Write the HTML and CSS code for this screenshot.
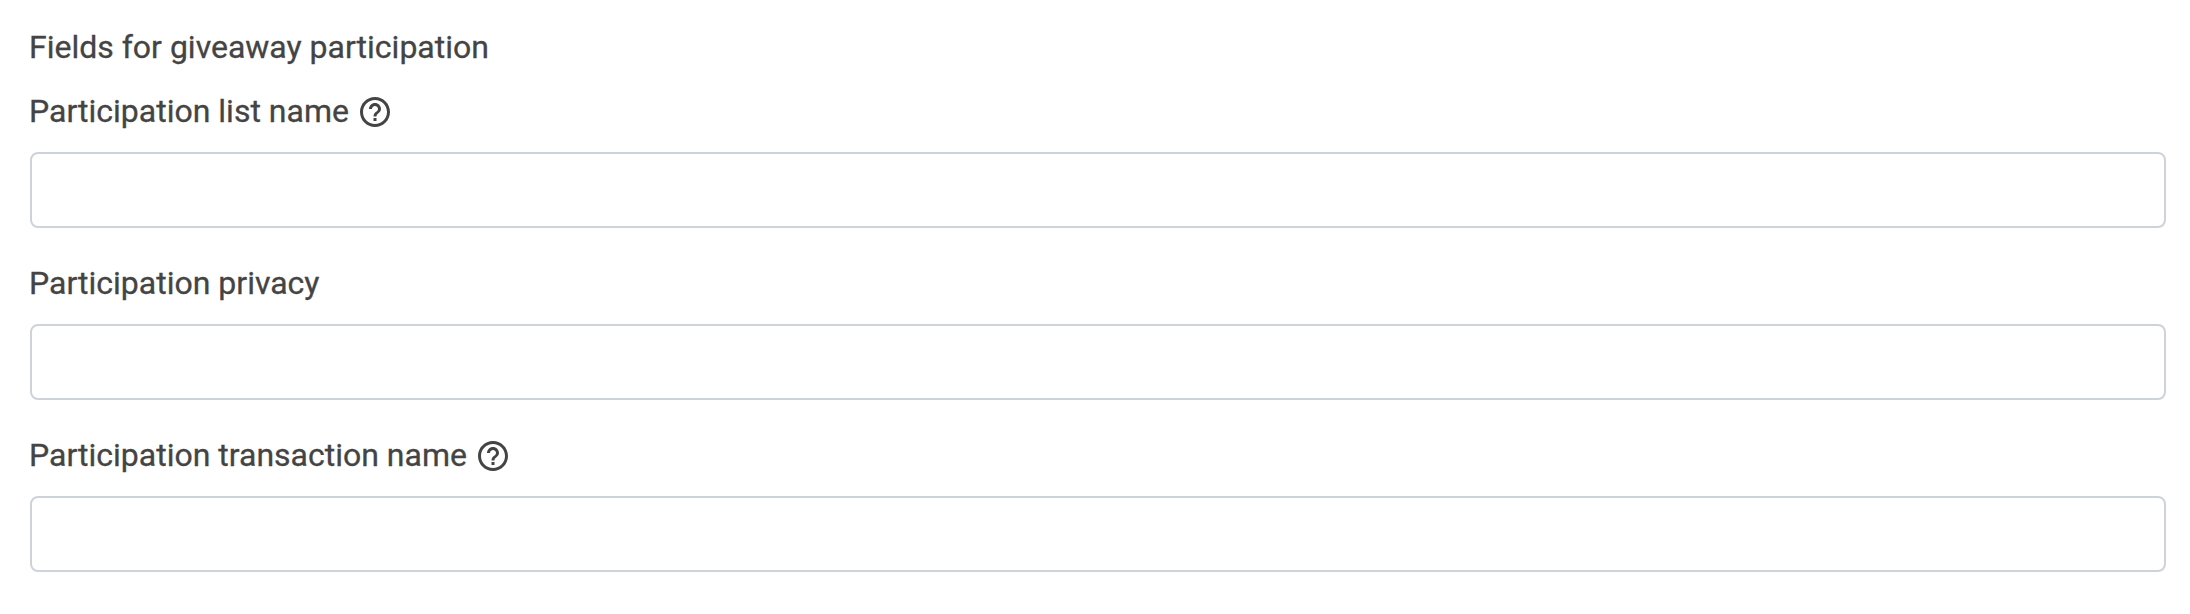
FILE: index.html
```
<!DOCTYPE html>
<html lang="en">
<head>
<meta charset="utf-8">
<title>Giveaway participation</title>
<link rel="stylesheet" href="styles.css">
</head>
<body>
<form class="form">
<h2 class="title">Fields for giveaway participation</h2>
<div class="field">
<label class="label" for="list">Participation list name
<svg class="help" viewBox="2 2 20 20"><path d="M11 18h2v-2h-2v2zm1-16C6.48 2 2 6.48 2 12s4.480 10 10 10 10-4.480 10-10S17.520 2 12 2zm0 18c-4.410 0-8-3.590-8-8s3.590-8 8-8 8 3.590 8 8-3.590 8-8 8zm0-14c-2.210 0-4 1.790-4 4h2c0-1.100.9-2 2-2s2 .9 2 2c0 2-3 1.750-3 5h2c0-2.250 3-2.500 3-5 0-2.210-1.790-4-4-4z"/></svg></label>
<input class="input" id="list" type="text">
</div>
<div class="field">
<label class="label" for="privacy">Participation privacy</label>
<input class="input" id="privacy" type="text">
</div>
<div class="field">
<label class="label" for="transaction">Participation transaction name
<svg class="help" viewBox="2 2 20 20"><path d="M11 18h2v-2h-2v2zm1-16C6.480 2 2 6.480 2 12s4.480 10 10 10 10-4.480 10-10S17.520 2 12 2zm0 18c-4.410 0-8-3.590-8-8s3.590-8 8-8 8 3.590 8 8-3.590 8-8 8zm0-14c-2.210 0-4 1.790-4 4h2c0-1.100.9-2 2-2s2 .9 2 2c0 2-3 1.750-3 5h2c0-2.250 3-2.500 3-5 0-2.210-1.790-4-4-4z"/></svg></label>
<input class="input" id="transaction" type="text">
</div>
</form>
</body>
</html>
```
FILE: styles.css
```
* { box-sizing: border-box; }
body { margin: 0; background: #fff; color: #444; font-family: Roboto, sans-serif; }
.form { padding: 24px 24px 0 29px; }
.title { height: 48px; margin: 0; font-size: 32px; font-weight: 400; line-height: 46px; -webkit-text-stroke: 0.3px #444; }
.field { display: flex; flex-direction: column; height: 172px; }
.title + .field { margin-top: 16px; }
.label { display: flex; align-items: flex-start; gap: 11px; height: 48px; font-size: 32px; line-height: 46px; -webkit-text-stroke: 0.3px #444; }
.help { width: 30px; height: 30px; margin-top: 9px; fill: currentColor; }
.input { height: 76px; margin: 16px 0 0 1px; border: 2px solid #ced3da; border-radius: 8px; background: #fff; font: inherit; outline: none; }
```
